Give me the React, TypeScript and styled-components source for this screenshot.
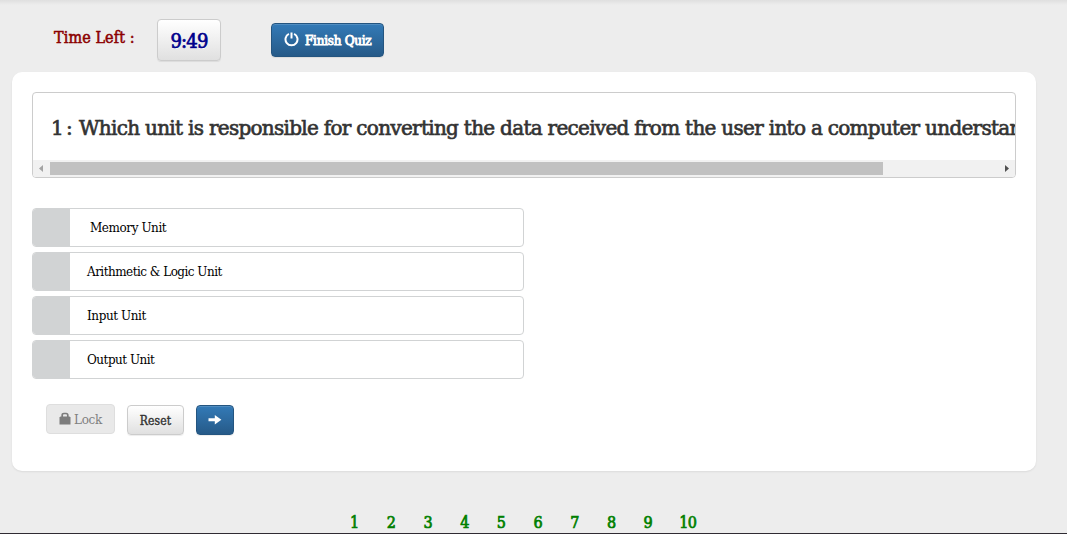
import React from "react";
import styled, { createGlobalStyle, css } from "styled-components";

const slab = `"Roboto Slab", "DejaVu Serif", serif`;
const narrowSlab = `"Roboto Slab", "DejaVu Serif Condensed", "DejaVu Serif", serif`;

const GlobalStyle = createGlobalStyle`
  * { box-sizing: border-box; }
  body { margin: 0; background: #ededed; overflow: hidden; }
`;

const Page = styled.div`
  width: 1067px;
  height: 534px;
  display: flex;
  flex-direction: column;
  background: linear-gradient(#dfdfdf, #ededed 5px);
  border-bottom: 1px solid #2f2b33;
  color: #333;
  overflow: hidden;
`;

/* Text run with its own tracking and stroke weight. */
const Label = styled.span<{ $size: number; $track?: number; $stroke?: number; $color?: string; $narrow?: boolean }>`
  display: block;
  white-space: pre;
  font-family: ${(p) => (p.$narrow ? narrowSlab : slab)};
  font-stretch: ${(p) => (p.$narrow ? "condensed" : "normal")};
  font-size: ${(p) => p.$size}px;
  line-height: 20px;
  letter-spacing: ${(p) => p.$track ?? 0}px;
  color: ${(p) => p.$color ?? "#333"};
  -webkit-text-stroke: ${(p) => p.$stroke ?? 0}px ${(p) => p.$color ?? "#333"};
`;

const Header = styled.header`
  height: 72px;
  flex: none;
  display: flex;
  align-items: flex-start;
  padding-left: 53px;
`;

const TimeCaption = styled.div`
  width: 104px;
  padding: 28px 0 0 1px;
`;

const raised = css`
  background: linear-gradient(#fff, #e0e0e0);
  border: 1px solid #ccc;
  border-radius: 4px;
  box-shadow: inset 0 1px 0 rgba(255, 255, 255, 0.15), 0 1px 1px rgba(0, 0, 0, 0.075);
  text-shadow: 0 1px 0 #fff;
`;

const primary = css`
  background: linear-gradient(#337ab7, #265a88);
  border: 1px solid #245580;
  border-radius: 4px;
  box-shadow: inset 0 1px 0 rgba(255, 255, 255, 0.15), 0 1px 1px rgba(0, 0, 0, 0.075);
  text-shadow: 0 -1px 0 rgba(0, 0, 0, 0.2);
`;

const Clock = styled.div`
  ${raised}
  width: 64px;
  height: 42px;
  margin-top: 19px;
  padding-top: 11px;
  display: flex;
  justify-content: center;
`;

const FinishButton = styled.button`
  ${primary}
  width: 113px;
  height: 34px;
  margin: 23px 0 0 50px;
  padding: 0 0 0 12px;
  display: flex;
  align-items: center;
  gap: 6px;

  span {
    padding-top: 2px;
  }
`;

const PowerIcon = styled.svg`
  width: 15px;
  height: 15px;
  flex: none;
  margin-bottom: 2px;
`;

const Card = styled.main`
  width: 1024px;
  height: 399px;
  flex: none;
  margin-left: 12px;
  padding: 20px;
  background: #fff;
  border-radius: 10px;
  box-shadow: 0 1px 2px rgba(0, 0, 0, 0.08);
`;

const Question = styled.section`
  height: 86px;
  display: flex;
  flex-direction: column;
  border: 1px solid #ccc;
  border-radius: 4px;
  overflow: hidden;
`;

const QuestionText = styled.div`
  height: 67px;
  flex: none;
  display: flex;
  padding: 25px 0 0 18px;
  overflow: hidden;
`;

const QuestionNumber = styled.div`
  width: 28px;
  flex: none;
`;

const ScrollTrack = styled.div`
  height: 17px;
  flex: none;
  display: flex;
  align-items: center;
  background: #f1f1f1;
`;

const ScrollArrow = styled.svg`
  width: 17px;
  height: 17px;
  flex: none;
`;

const ScrollThumb = styled.div`
  width: 833px;
  height: 13px;
  margin-right: auto;
  background: #c1c1c1;
`;

const Options = styled.div`
  display: grid;
  gap: 5px;
  width: 492px;
  margin-top: 30px;
`;

const Option = styled.div<{ $pad: number }>`
  height: 39px;
  display: flex;
  align-items: center;
  gap: ${(p) => p.$pad}px;
  border: 1px solid #d1d3d4;
  border-radius: 4px;
  overflow: hidden;
`;

const Marker = styled.div`
  width: 37px;
  height: 37px;
  background: #d1d3d4;
`;

const Actions = styled.div`
  display: flex;
  align-items: flex-start;
  gap: 12px;
  margin: 25px 0 0 14px;
`;

const LockButton = styled.button`
  width: 69px;
  height: 30px;
  display: flex;
  align-items: center;
  gap: 3px;
  padding: 0 0 0 12px;
  background: #e9e9e9;
  border: 1px solid #dedede;
  border-radius: 4px;

  svg {
    margin-bottom: 1px;
  }

  span {
    padding-top: 1px;
  }
`;

const ResetButton = styled.button`
  ${raised}
  width: 57px;
  height: 30px;
  margin-top: 1px;
  padding: 1px 0 0;
  display: flex;
  align-items: center;
  justify-content: center;
`;

const NextButton = styled.button`
  ${primary}
  width: 38px;
  height: 30px;
  margin-top: 1px;
  padding: 0;
  display: flex;
  align-items: center;
  justify-content: center;
`;

const Pager = styled.nav`
  display: flex;
  width: 404px;
  margin: 42px 0 0 336px;
`;

const PageLink = styled.div<{ $wide?: boolean }>`
  width: ${(p) => (p.$wide ? 43.4 : 36.7)}px;
  flex: none;
  display: flex;
  justify-content: center;
`;

const options = [
  { text: "Memory Unit", pad: 20, track: -0.42 },
  { text: "Arithmetic & Logic Unit", pad: 17, track: -0.52 },
  { text: "Input Unit", pad: 17, track: -0.42 },
  { text: "Output Unit", pad: 17, track: -0.5 },
];

export default function App() {
  return (
    <>
      <GlobalStyle />
      <Page>
        <Header>
          <TimeCaption>
            <Label $narrow $size={16} $track={0.1} $stroke={0.5} $color="#8b0000">Time Left :</Label>
          </TimeCaption>
          <Clock>
            <Label $narrow $size={20} $track={-0.8} $stroke={0.7} $color="#00008b">9:49</Label>
          </Clock>
          <FinishButton>
            <PowerIcon viewBox="0 0 15 15" fill="none" stroke="#fff">
              <path d="M4.9 1.9A6 6 0 1 0 10.1 1.9" strokeWidth="2" />
              <path d="M7.5 0.5V6.5" strokeWidth="2" />
            </PowerIcon>
            <Label $size={12} $track={-0.25} $stroke={0.9} $color="#fff">Finish Quiz</Label>
          </FinishButton>
        </Header>
        <Card>
          <Question>
            <QuestionText>
              <QuestionNumber><Label $size={20} $track={-2} $stroke={0.65}>1 :</Label></QuestionNumber>
              <Label $size={20} $track={-0.71} $stroke={0.65}>
                Which unit is responsible for converting the data received from the user into a computer understandable form?
              </Label>
            </QuestionText>
            <ScrollTrack>
              <ScrollArrow viewBox="0 0 17 17"><path d="M10 5v7L6 8.5z" fill="#a3a3a3" /></ScrollArrow>
              <ScrollThumb />
              <ScrollArrow viewBox="0 0 17 17"><path d="M7 5v7l4-3.5z" fill="#505050" /></ScrollArrow>
            </ScrollTrack>
          </Question>
          <Options>
            {options.map((o) => (
              <Option key={o.text} $pad={o.pad}>
                <Marker />
                <Label $size={12} $track={o.track} $color="#000">{o.text}</Label>
              </Option>
            ))}
          </Options>
          <Actions>
            <LockButton>
              <svg width="12" height="13" viewBox="0 0 12 13">
                <path d="M3.2 6V3.2q0-1.7 1.7-1.7h2.2q1.7 0 1.7 1.7V6" fill="none" stroke="#7d7d7d" strokeWidth="1.7" />
                <path d="M1.5 4.4h9l1 1v7.1H.5V5.4z" fill="#7d7d7d" />
              </svg>
              <Label $size={12} $track={-0.3} $color="#808080">Lock</Label>
            </LockButton>
            <ResetButton><Label $narrow $size={12} $track={0.1} $stroke={0.4}>Reset</Label></ResetButton>
            <NextButton>
              <svg width="14" height="12" viewBox="0 0 14 12">
                <path d="M0.5 4.2H6.8V1L13.4 5.7 6.8 10.4V7.2H0.5z" fill="#fff" />
              </svg>
            </NextButton>
          </Actions>
        </Card>
        <Pager>
          {[1, 2, 3, 4, 5, 6, 7, 8, 9, 10].map((n) => (
            <PageLink key={n} $wide={n === 10}>
              <Label $narrow $size={16} $track={-0.6} $stroke={0.7} $color="#008000">{n}</Label>
            </PageLink>
          ))}
        </Pager>
      </Page>
    </>
  );
}
